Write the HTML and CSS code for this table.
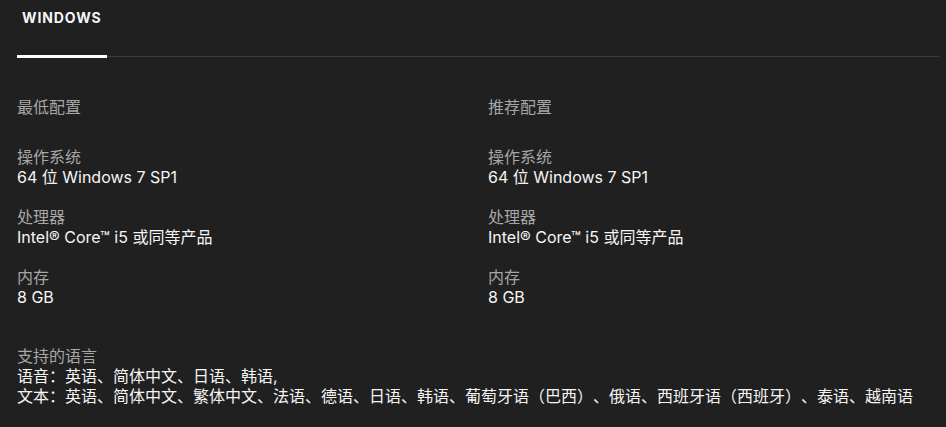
FILE: index.html
```html
<!DOCTYPE html>
<html lang="zh-CN">

<head>
    <meta charset="UTF-8">
    <title>系统需求</title>
    <link rel="stylesheet" href="styles.css">
</head>

<body>

    <div class="specs">
        <div class="tabs">
            <div class="tab active">WINDOWS</div>
        </div>

        <div class="columns">
            <div class="column">
                <h2>最低配置</h2>
                <div class="item">
                    <div class="label">操作系统</div>
                    <div class="value">64 位 Windows 7 SP1</div>
                </div>
                <div class="item">
                    <div class="label">处理器</div>
                    <div class="value">Intel® Core™ i5 或同等产品</div>
                </div>
                <div class="item">
                    <div class="label">内存</div>
                    <div class="value">8 GB</div>
                </div>
            </div>

            <div class="column">
                <h2>推荐配置</h2>
                <div class="item">
                    <div class="label">操作系统</div>
                    <div class="value">64 位 Windows 7 SP1</div>
                </div>
                <div class="item">
                    <div class="label">处理器</div>
                    <div class="value">Intel® Core™ i5 或同等产品</div>
                </div>
                <div class="item">
                    <div class="label">内存</div>
                    <div class="value">8 GB</div>
                </div>
            </div>
        </div>

        <div class="languages">
            <div class="label">支持的语言</div>
            <div class="value">语音：英语、简体中文、日语、韩语,</div>
            <div class="value">文本：英语、简体中文、繁体中文、法语、德语、日语、韩语、葡萄牙语（巴西）、俄语、西班牙语（西班牙）、泰语、越南语</div>
        </div>
    </div>

</body>

</html>
```

FILE: styles.css
```css
body {
    background-color: #202020;
    color: #f5f5f5;
    font-family: Inter, "Noto Sans CJK SC", sans-serif;
    font-size: 16px;
    line-height: 20px;
    text-spacing-trim: space-all;
    margin: 0;
    padding: 0;
}

.specs {
    padding: 0 6px 0 17px;
}

.tabs {
    display: flex;
    border-bottom: 1px solid #3a3a3a;
}

.tab {
    width: 85px;
    padding: 0 0 0 5px;
    margin-bottom: -2px;
    font-size: 14px;
    font-weight: 700;
    letter-spacing: 0.9px;
    color: #f5f5f5;
}

.tab.active {
    border-bottom: 3px solid #fff;
    height: 55px;
    line-height: 35px;
}

.columns {
    display: grid;
    grid-template-columns: 471px 1fr;
    padding-top: 40px;
}

h2 {
    margin: 0 0 30px;
    font-size: 16px;
    font-weight: 400;
    color: #a6a6a6;
}

.item {
    margin-bottom: 20px;
}

.label {
    color: #a6a6a6;
}

.value {
    color: #f5f5f5;
}

.languages {
    padding-top: 19px;
}
```
